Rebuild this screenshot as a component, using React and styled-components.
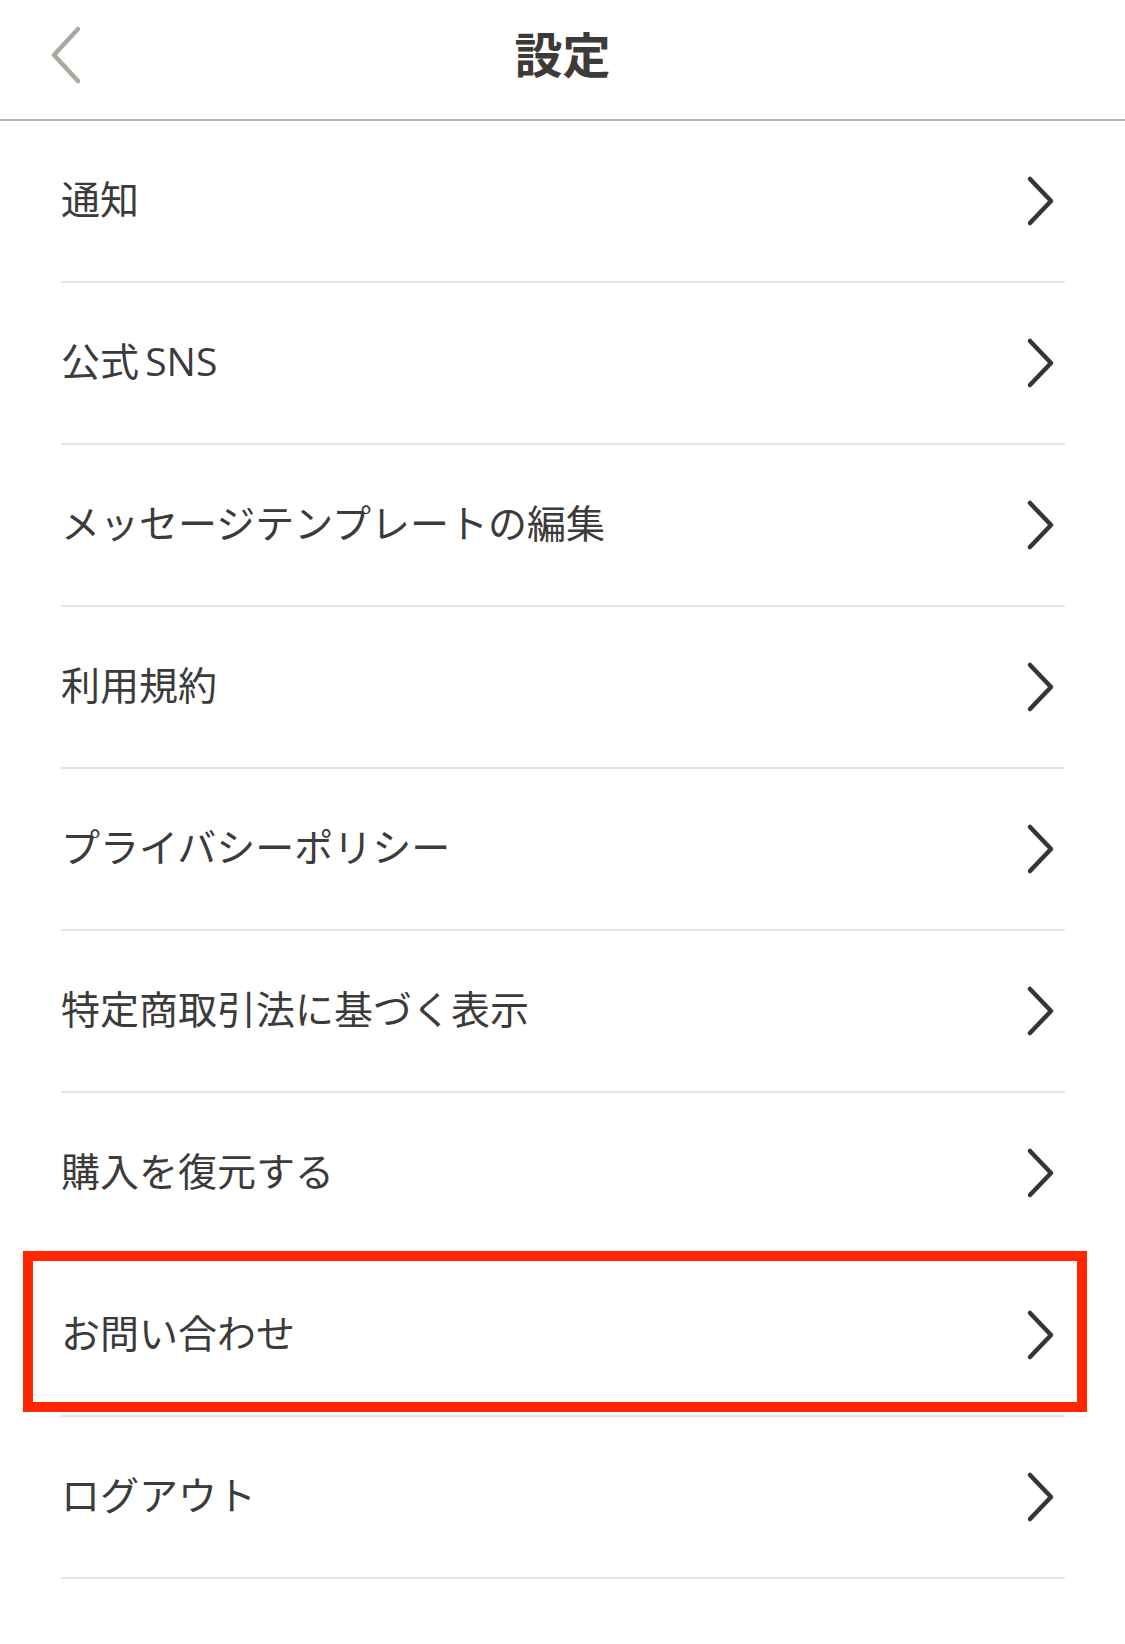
import styled, { createGlobalStyle } from "styled-components";

const GlobalStyle = createGlobalStyle`
  * { box-sizing: border-box; }
  html, body { margin: 0; padding: 0; background: #fff; }
  body {
    font-family: "Open Sans", "Noto Sans CJK JP", sans-serif;
    color: #3b3b3b;
  }
`

const items = [
  "通知",
  "公式 SNS",
  "メッセージテンプレートの編集",
  "利用規約",
  "プライバシーポリシー",
  "特定商取引法に基づく表示",
  "購入を復元する",
  "お問い合わせ",
  "ログアウト",
]

const BackIcon = () => (
  <svg width="36" height="64" viewBox="0 0 36 64" fill="none">
    <polyline points="30,6 6,32 30,58" stroke="#a9a9a2" strokeWidth="4.5" strokeLinecap="round" strokeLinejoin="round" />
  </svg>
)

const ChevronIcon = () => (
  <svg width="30" height="52" viewBox="0 0 30 52" fill="none">
    <polyline points="5,4 26,26 5,48" stroke="#353535" strokeWidth="4.5" strokeLinecap="round" strokeLinejoin="round" />
  </svg>
)

const App = () => {
  return (
    <Page>
      <GlobalStyle />
      <Header>
        <BackButton><BackIcon /></BackButton>
        <Title>設定</Title>
        <span />
      </Header>
      <List>
        {items.map((label) => (
          <Row key={label} highlighted={label === "お問い合わせ" ? 1 : 0}>
            <Label>{label}</Label>
            <ChevronIcon />
          </Row>
        ))}
      </List>
    </Page>
  )
}

export default App

const Page = styled.div`
  width: 1125px;
  min-height: 1644px;
  background: #fff;
`

const Header = styled.header`
  height: 121px;
  display: grid;
  grid-template-columns: 200px 1fr 200px;
  align-items: center;
  border-bottom: 2px solid #b8b8b8;
`

const BackButton = styled.div`
  display: flex;
  align-items: center;
  padding-left: 48px;
  margin-top: -10px;
`

const Title = styled.h1`
  margin: 0 0 16px;
  text-align: center;
  font-size: 48px;
  font-weight: 700;
  font-family: "Noto Sans CJK JP", sans-serif;
  color: #3d3a38;
  letter-spacing: 0;
`

const List = styled.div`
  display: flex;
  flex-direction: column;
`

const Row = styled.div`
  position: relative;
  height: 162px;
  margin: 0 60px 0 61px;
  display: flex;
  align-items: center;
  justify-content: space-between;
  padding-right: 10px;
  border-bottom: 2px solid #e4e4e4;

  ${(p) => p.highlighted && `
    &::after {
      content: "";
      position: absolute;
      top: -4px;
      bottom: 3px;
      left: -38px;
      right: -22px;
      border: 10px solid #ff2600;
      pointer-events: none;
    }
  `}
`

const Label = styled.span`
  font-size: 39px;
  color: #3b3b3b;
  margin-bottom: 8px;
  word-spacing: -4px;
`
